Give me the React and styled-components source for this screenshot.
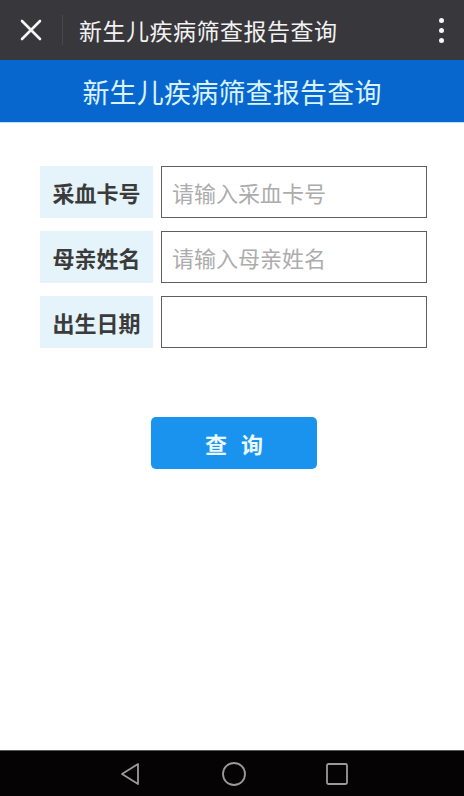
import React from 'react';
import styled, { createGlobalStyle } from 'styled-components';

const GlobalStyle = createGlobalStyle`
  html, body {
    margin: 0;
    padding: 0;
    height: 100%;
    background: #ffffff;
  }
  #root {
    height: 100%;
  }
`;

const Screen = styled.div`
  width: 464px;
  height: 796px;
  display: flex;
  flex-direction: column;
  font-family: "Noto Sans CJK SC", "Noto Sans", sans-serif;
  background: #ffffff;
  overflow: hidden;
`;

const TopBar = styled.div`
  height: 60px;
  flex-shrink: 0;
  background: #38373c;
  display: flex;
  align-items: center;
  padding: 0 0 0 20px;
`;

const CloseButton = styled.div`
  width: 22px;
  height: 22px;
  display: flex;
  align-items: center;
  justify-content: center;
`;

const Divider = styled.div`
  width: 1px;
  height: 30px;
  background: #4a494e;
  margin: 0 16px 0 20px;
`;

const TopTitle = styled.div`
  flex: 1;
  color: #f2f2f2;
  font-size: 23px;
  letter-spacing: 0.5px;
`;

const MoreButton = styled.div`
  width: 58px;
  height: 60px;
  display: flex;
  flex-direction: column;
  align-items: center;
  justify-content: center;
  gap: 5px;
  padding-left: 12px;
  box-sizing: border-box;
`;

const Dot = styled.span`
  width: 5px;
  height: 5px;
  border-radius: 50%;
  background: #f5f5f5;
`;

const Header = styled.div`
  height: 62px;
  flex-shrink: 0;
  background: #0867cf;
  border-bottom: 1px solid #b8e4fb;
  display: flex;
  align-items: center;
  justify-content: center;
  color: #d9f3ff;
  font-size: 27px;
  letter-spacing: 0.2px;
`;

const Content = styled.div`
  flex: 1;
  display: flex;
  flex-direction: column;
  padding: 43px 37px 0 40px;
`;

const Form = styled.div`
  display: flex;
  flex-direction: column;
  gap: 13px;
`;

const Row = styled.div`
  display: flex;
  height: 52px;
  gap: 8px;
`;

const Label = styled.div`
  width: 113px;
  background: #e5f3fa;
  display: flex;
  align-items: center;
  justify-content: center;
  color: #3b3b3b;
  font-weight: 700;
  font-size: 22px;
`;

const Input = styled.input`
  flex: 1;
  min-width: 0;
  border: 1.5px solid #5e5e5e;
  box-sizing: border-box;
  padding: 0 0 0 10px;
  font-family: inherit;
  font-size: 22px;
  color: #333;
  background: #ffffff;
  outline: none;

  &::placeholder {
    color: #acacac;
  }
`;

const Actions = styled.div`
  display: flex;
  padding: 69px 0 0 111px;
`;

const QueryButton = styled.button`
  width: 166px;
  height: 52px;
  border: none;
  border-radius: 5px;
  background: #1a93ee;
  color: #eafaff;
  font-family: inherit;
  font-weight: 700;
  font-size: 22px;
  letter-spacing: 14px;
  text-indent: 14px;
  cursor: pointer;
`;

const NavBar = styled.div`
  height: 45px;
  flex-shrink: 0;
  background: #060304;
  border-top: 1px solid #5a5a5a;
  display: flex;
  align-items: center;
  justify-content: center;
  gap: 77px;
  padding-left: 4px;
`;

const NavIcon = styled.svg`
  width: 26px;
  height: 26px;
`;

const fields = [
  { label: '采血卡号', placeholder: '请输入采血卡号' },
  { label: '母亲姓名', placeholder: '请输入母亲姓名' },
  { label: '出生日期', placeholder: '' },
];

export default function App() {
  return (
    <>
      <GlobalStyle />
      <Screen>
        <TopBar>
          <CloseButton>
            <svg width="22" height="22" viewBox="0 0 22 22">
              <path d="M2 2 L20 20 M20 2 L2 20" stroke="#f5f5f5" strokeWidth="2.6" strokeLinecap="round" />
            </svg>
          </CloseButton>
          <Divider />
          <TopTitle>新生儿疾病筛查报告查询</TopTitle>
          <MoreButton>
            <Dot />
            <Dot />
            <Dot />
          </MoreButton>
        </TopBar>

        <Header>新生儿疾病筛查报告查询</Header>

        <Content>
          <Form>
            {fields.map((f) => (
              <Row key={f.label}>
                <Label>{f.label}</Label>
                <Input placeholder={f.placeholder} />
              </Row>
            ))}
          </Form>
          <Actions>
            <QueryButton>查询</QueryButton>
          </Actions>
        </Content>

        <NavBar>
          <NavIcon viewBox="0 0 26 26">
            <path d="M20 3 L20 23 L4 13 Z" fill="none" stroke="#9a9a9a" strokeWidth="1.8" strokeLinejoin="round" />
          </NavIcon>
          <NavIcon viewBox="0 0 26 26">
            <circle cx="13" cy="13" r="11" fill="none" stroke="#9a9a9a" strokeWidth="1.8" />
          </NavIcon>
          <NavIcon viewBox="0 0 26 26">
            <rect x="3" y="3" width="20" height="20" rx="1.5" fill="none" stroke="#9a9a9a" strokeWidth="1.8" />
          </NavIcon>
        </NavBar>
      </Screen>
    </>
  );
}
